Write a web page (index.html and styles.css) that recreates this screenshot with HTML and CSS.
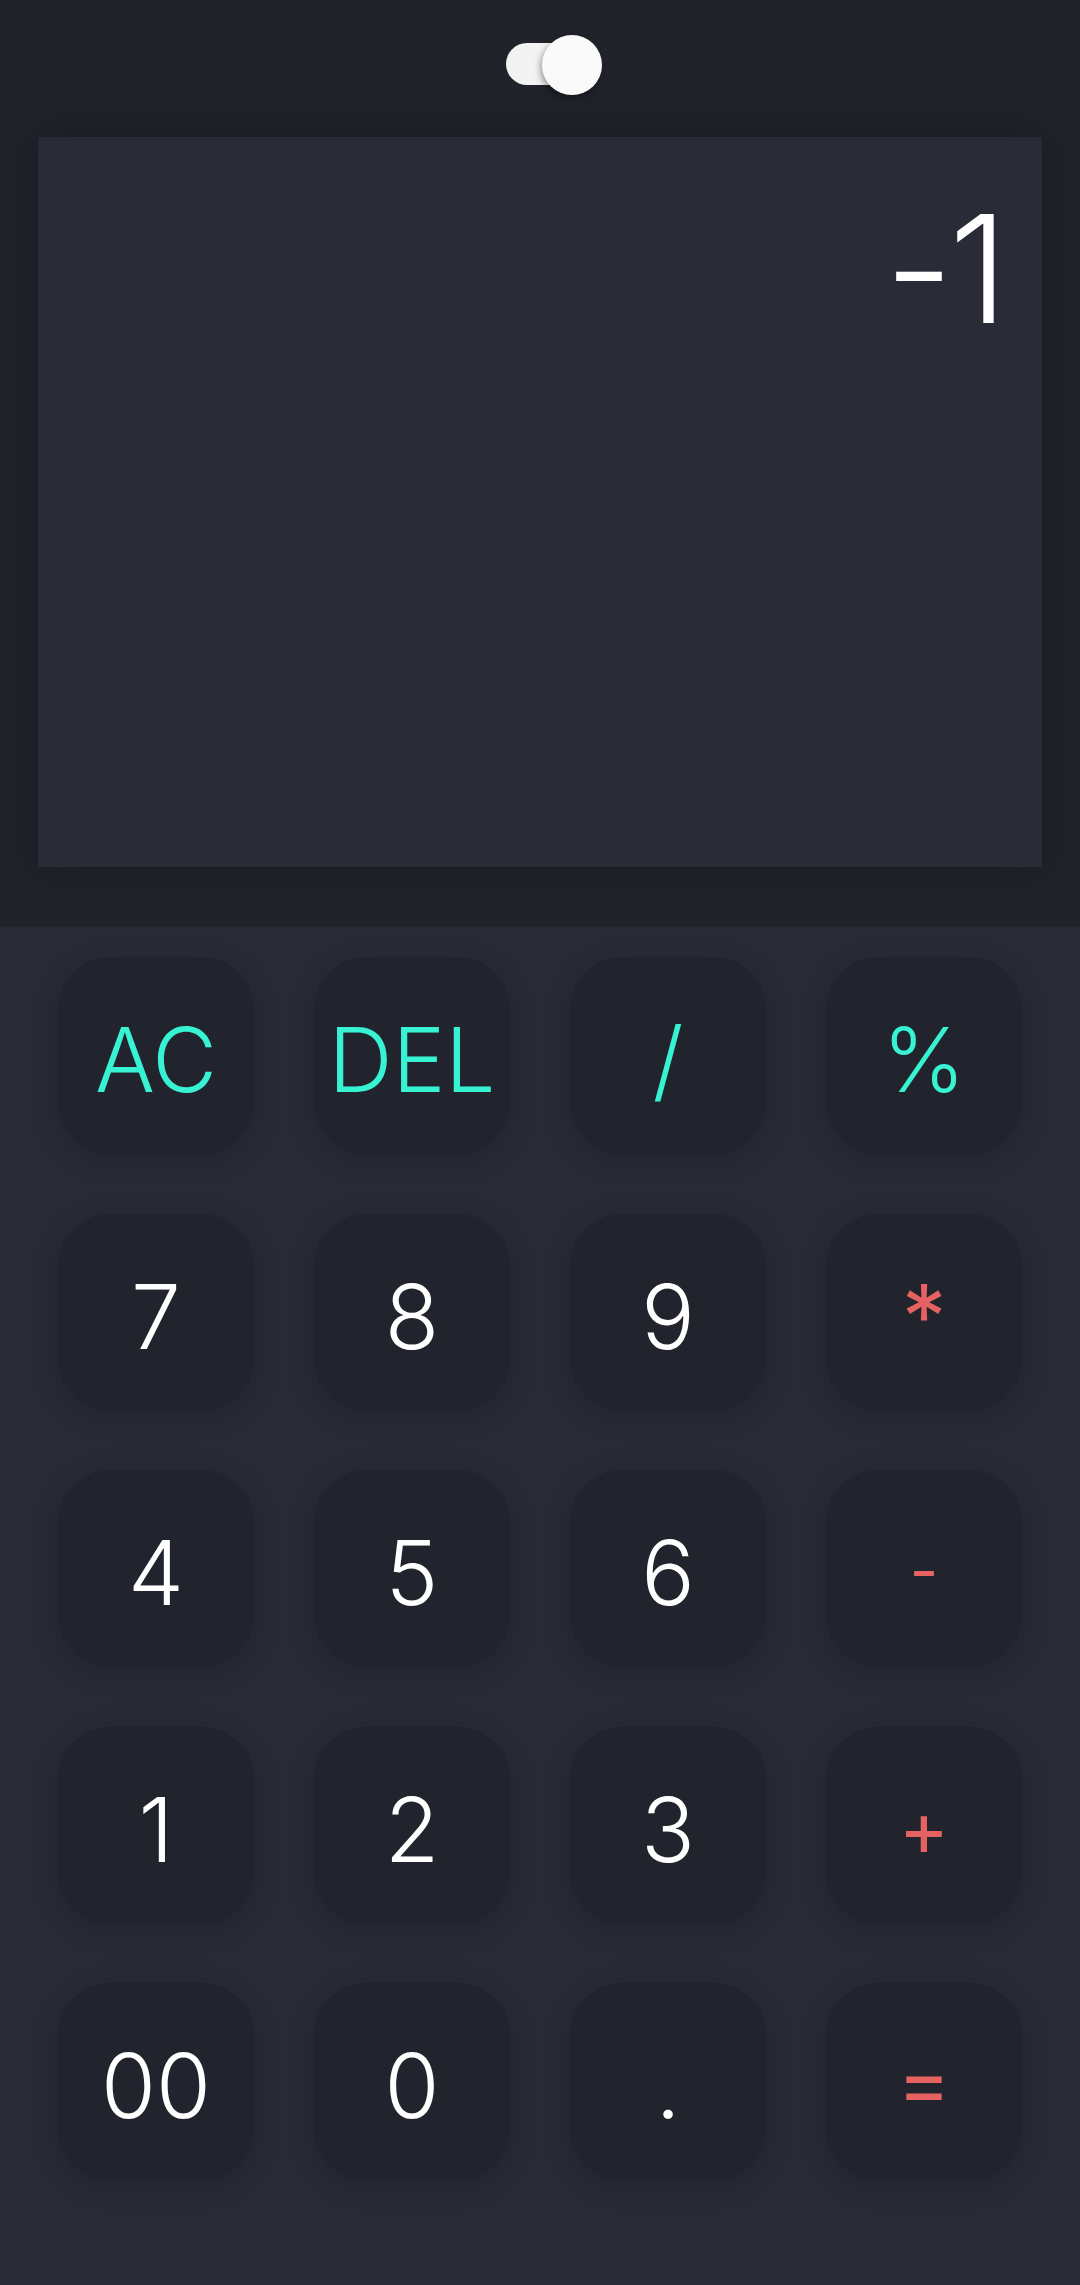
FILE: index.html
```html
<!DOCTYPE html>
<html lang="en">
<head>
<meta charset="utf-8">
<title>Calculator</title>
<link rel="stylesheet" href="styles.css">
</head>
<body>
<div class="app">
  <header class="top">
    <div class="toggle-row">
      <div class="toggle">
        <span class="track"></span>
        <span class="knob"></span>
      </div>
    </div>
    <div class="display">
      <span class="result">-1</span>
    </div>
  </header>
  <main class="keypad">
    <button class="key accent">AC</button>
    <button class="key accent">DEL</button>
    <button class="key accent">/</button>
    <button class="key accent">%</button>
    <button class="key">7</button>
    <button class="key">8</button>
    <button class="key">9</button>
    <button class="key op">*</button>
    <button class="key">4</button>
    <button class="key">5</button>
    <button class="key">6</button>
    <button class="key op small-minus">-</button>
    <button class="key">1</button>
    <button class="key">2</button>
    <button class="key">3</button>
    <button class="key op small-plus">+</button>
    <button class="key">00</button>
    <button class="key">0</button>
    <button class="key">.</button>
    <button class="key op small-eq">=</button>
  </main>
</div>
</body>
</html>
```
FILE: styles.css
```css
* { box-sizing: border-box; }
html, body {
  margin: 0;
  padding: 0;
  background: #292a36;
}
body {
  width: 1080px;
  height: 2285px;
  overflow: hidden;
  font-family: "Inter", "Liberation Sans", sans-serif;
}
.app {
  display: flex;
  flex-direction: column;
  height: 2285px;
}
.top {
  background: #21232b;
  padding: 0 38px 60px 38px;
  height: 927px;
  display: flex;
  flex-direction: column;
}
.toggle-row {
  height: 137px;
  display: flex;
  justify-content: center;
  padding-top: 35px;
  padding-left: 28px;
}
.toggle {
  position: relative;
  width: 96px;
  height: 60px;
}
.track {
  position: absolute;
  left: 0;
  top: 8px;
  width: 80px;
  height: 42px;
  border-radius: 21px;
  background: #f3f3f4;
}
.knob {
  position: absolute;
  left: 36px;
  top: 0;
  width: 60px;
  height: 60px;
  border-radius: 50%;
  background: #fafafa;
  box-shadow: -2px 3px 6px rgba(0, 0, 0, 0.35);
}
.display {
  flex: 1;
  background: #292b37;
  box-shadow: 0 0 40px rgba(0, 0, 0, 0.25);
  display: flex;
  justify-content: flex-end;
  align-items: flex-start;
  padding: 57px 38px 0 0;
}
.result {
  color: #ffffff;
  font-size: 150px;
  font-weight: 300;
  line-height: 1;
  letter-spacing: -4px;
}
.keypad {
  flex: 1;
  background: #292a36;
  padding: 30px 58px 0 58px;
  display: grid;
  grid-template-columns: repeat(4, 196px);
  grid-auto-rows: 197px;
  column-gap: 60px;
  row-gap: 59.5px;
  align-content: start;
}
.key {
  border: none;
  margin: 0;
  padding: 0;
  background: #22242d;
  border-radius: 52px;
  box-shadow: 0 6px 28px rgba(0, 0, 0, 0.16);
  color: #ffffff;
  font-family: "Inter", "Liberation Sans", sans-serif;
  font-size: 89px;
  font-weight: 300;
  line-height: 1;
  display: flex;
  align-items: center;
  justify-content: center;
  padding-top: 8px;
}
.key.accent { color: #38f3d3; }
.key.op { color: #e66161; font-weight: 400; }
.key.small-minus { font-size: 62px; padding-top: 4px; }
.key.small-plus { font-size: 76px; padding-top: 6px; }
.key.small-eq { font-size: 80px; padding-top: 0; }
```
